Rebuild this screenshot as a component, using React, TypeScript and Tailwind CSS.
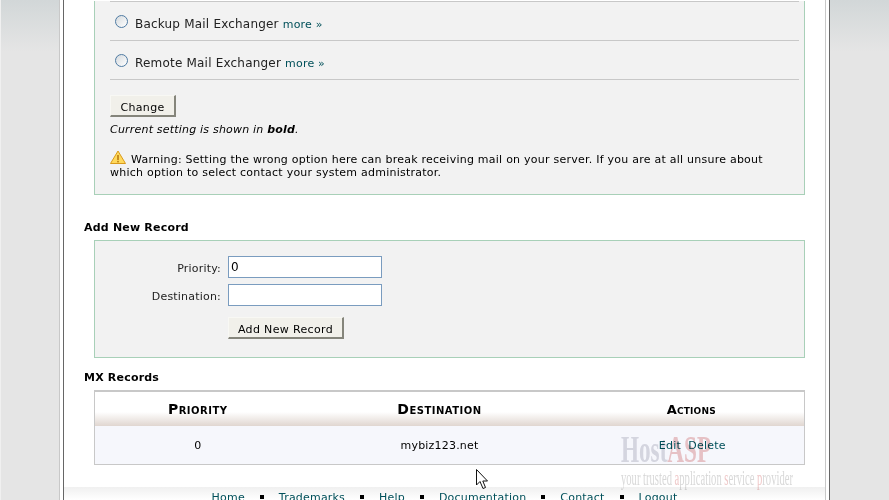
import React from "react";

const font = { fontFamily: '"DejaVu Sans", Verdana, sans-serif' };

function Radio() {
  return <span className="block w-[13px] h-[13px] rounded-full border-[1.5px] border-[#4f7ba3] bg-gradient-to-br from-[#d5dade] to-white shrink-0 ml-[5px]" />;
}

function Btn({ children, w }: { children: React.ReactNode; w: string }) {
  return (
    <button className={`${w} h-[22px] bg-[#f1f0ea] border border-t-[#f8f8f4] border-l-[#f8f8f4] border-r-2 border-b-2 border-r-[#85857b] border-b-[#85857b] text-[11px] tracking-[0.35px] text-black flex items-center justify-center pt-[6px]`}>
      {children}
    </button>
  );
}

function Sep() {
  return <span className="w-[4px] h-[4px] bg-black block mt-[5px]" />;
}

function Row({ label }: { label: string }) {
  return (
    <div className="border-t border-[#c8c8c8] h-[39px] flex items-center">
      <Radio />
      <span className="ml-[7px] pt-[6px] flex items-baseline whitespace-nowrap">
        <span className="text-[12px] tracking-[0.2px] text-[#222]">{label}</span>
        <a className="ml-[4px] text-[11px] tracking-[0.2px] text-[#00505a]">more »</a>
      </span>
    </div>
  );
}

export default function App() {
  return (
    <div style={font} className="w-[889px] h-[500px] overflow-hidden flex bg-white text-black relative">
      <div className="w-[59px] h-full bg-[#e5e5e5] border-l border-[#f0f0f0] shrink-0">
        <div className="h-[52px] bg-gradient-to-b from-[#d2d7d8] to-[#e5e5e5]" />
      </div>
      <div className="w-[771px] h-full border-l border-l-[#c8c8c8] border-r border-r-[#666] shrink-0">
        <div className="mx-[3px] h-full border-l border-l-[#666] border-r border-r-[#c8c8c8] flex flex-col">
          <div className="pl-[20px] flex-1">
            {/* Option panel */}
            <section className="ml-[10px] w-[711px] h-[194px] bg-[#f2f2f2] border border-t-0 border-[#a8d0b8] pl-[15px] pr-[5px] text-[11px]">
              <div className="mt-[1px]">
                <Row label="Backup Mail Exchanger" />
                <Row label="Remote Mail Exchanger" />
              </div>
              <div className="border-t border-[#c8c8c8] pt-[15px]">
                <Btn w="w-[66px]">Change</Btn>
                <p className="italic mt-[6px] leading-[14px] tracking-[0.2px]">Current setting is shown in <b>bold</b>.</p>
                <p className="mt-[13px] leading-[13px] tracking-[0.24px] pr-[29px]">
                  <svg viewBox="0 0 16 14" className="inline-block w-[16px] h-[14px] mr-[5px] align-[-1px]">
                    <path d="M8 1 L15.5 13.5 H0.5 Z" fill="#ffd95c" stroke="#d99a1c" strokeWidth="1" strokeLinejoin="round" />
                    <rect x="7.2" y="5" width="1.6" height="5" fill="#b97a10" />
                    <rect x="7.2" y="10.8" width="1.6" height="1.6" fill="#b97a10" />
                  </svg>
                  Warning: Setting the wrong option here can break receiving mail on your server. If you are at all unsure about which option to select contact your system administrator.
                </p>
              </div>
            </section>

            <h2 className="mt-[26px] text-[11px] font-bold leading-[14px] tracking-[0.2px]">Add New Record</h2>
            <section className="ml-[10px] w-[711px] mt-[5px] h-[118px] bg-[#f2f2f2] border border-[#a8d0b8] text-[11px] tracking-[0.2px]">
              <div className="flex items-center h-[22px] mt-[15px]">
                <label className="w-[126px] text-right text-[#222] pt-[4px]">Priority:</label>
                <input readOnly value="0" className="ml-[7px] w-[154px] h-[22px] bg-white border border-[#7a9cbf] px-[2px] text-[12px] outline-none" style={font} />
              </div>
              <div className="flex items-center h-[22px] mt-[6px]">
                <label className="w-[126px] text-right text-[#222] pt-[4px]">Destination:</label>
                <input readOnly value="" className="ml-[7px] w-[154px] h-[22px] bg-white border border-[#7a9cbf] px-[2px] outline-none" />
              </div>
              <div className="ml-[133px] mt-[11px]">
                <Btn w="w-[116px]">Add New Record</Btn>
              </div>
            </section>

            <h2 className="mt-[13px] text-[11px] font-bold leading-[14px] tracking-[0.2px]">MX Records</h2>
            <table className="ml-[10px] mt-[5px] w-[711px] h-[75px] border-t-2 border-x border-b border-[#c8c8c8] table-fixed text-[11px] tracking-[0.2px]">
              <thead>
                <tr className="h-[35px] bg-gradient-to-b from-white from-60% to-[#e0d6d0]">
                  <th className="w-[206px] text-[14px] tracking-[0.5px] font-bold [font-variant:small-caps] pt-[1px]">Priority</th>
                  <th className="w-[278px] text-[14px] tracking-[0.5px] font-bold [font-variant:small-caps] pt-[1px]">Destination</th>
                  <th className="text-[13px] font-bold [font-variant:small-caps] pt-[1px]">Actions</th>
                </tr>
              </thead>
              <tbody>
                <tr className="bg-[#f6f7fc]">
                  <td className="text-center pt-[3px]">0</td>
                  <td className="text-center pt-[3px]">mybiz123.net</td>
                  <td className="text-center pt-[3px] pl-[2px] text-[#00505a]">Edit&nbsp; Delete</td>
                </tr>
              </tbody>
            </table>
          </div>
          <footer className="h-[13px] bg-gradient-to-b from-[#f0f0f0] to-white flex items-start justify-center gap-[15px] text-[11px] leading-[16px] pt-[3px] tracking-[0.2px] text-[#00505a]">
            <a>Home</a><Sep /><a>Trademarks</a><Sep /><a>Help</a><Sep /><a>Documentation</a><Sep /><a>Contact</a><Sep /><a>Logout</a>
          </footer>
        </div>
      </div>
      <div className="flex-1 h-full bg-[#e5e5e5]">
        <div className="h-[52px] bg-gradient-to-b from-[#d2d7d8] to-[#e5e5e5]" />
      </div>

      {/* Watermark */}
      <div className="absolute left-[621px] top-[431px] w-[180px] pointer-events-none mix-blend-multiply" style={{ fontFamily: '"Liberation Serif", serif' }}>
        <div className="text-[38px] font-bold leading-[36px] origin-left scale-x-[0.61] text-[#dcdce2] whitespace-nowrap">Host<span className="text-[#efc8c8]">ASP</span></div>
        <div className="text-[20px] leading-[20px] mt-[1px] origin-left scale-x-[0.53] text-[#d8d8d8] whitespace-nowrap">your trusted <span className="text-[#efc8c8]">a</span>pplication <span className="text-[#efc8c8]">s</span>ervice <span className="text-[#efc8c8]">p</span>rovider</div>
      </div>

      {/* Cursor */}
      <svg viewBox="0 0 13 21" className="absolute left-[476px] top-[469px] w-[13px] h-[21px]">
        <path d="M0.5 0.5 V16 L4 12.5 L7 19.5 L9.5 18.5 L6.8 12 H11.5 Z" fill="#fff" stroke="#111" strokeWidth="1" strokeLinejoin="miter" />
      </svg>
    </div>
  );
}
